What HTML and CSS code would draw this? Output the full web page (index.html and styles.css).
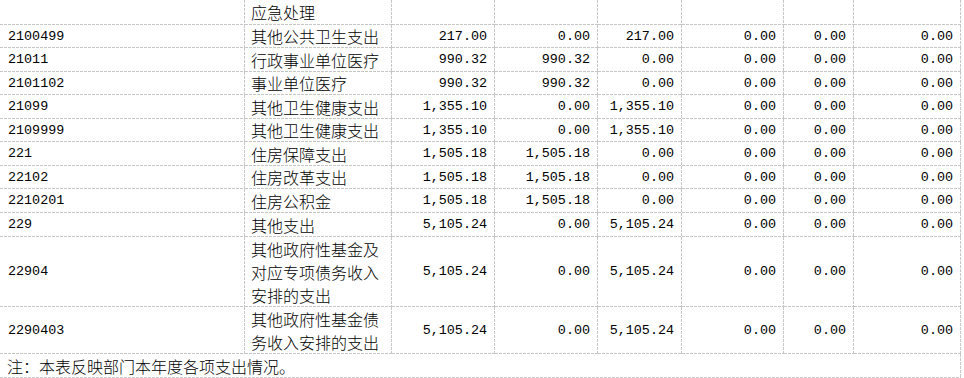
FILE: index.html
```html
<!DOCTYPE html>
<html lang="zh-CN">
<head>
<meta charset="utf-8">
<title>支出表</title>
<link rel="stylesheet" href="styles.css">
</head>
<body>
<table class="sheet">
  <colgroup>
    <col class="w0"><col class="w1"><col class="w2"><col class="w3"><col class="w4"><col class="w5"><col class="w6"><col class="w7">
  </colgroup>
  <tbody>
    <tr class="h25"><td class="c code"></td><td class="c name">应急处理</td><td class="c num"></td><td class="c num"></td><td class="c num"></td><td class="c num"></td><td class="c num"></td><td class="c num"></td></tr>
    <tr class="h23"><td class="c code">2100499</td><td class="c name">其他公共卫生支出</td><td class="c num">217.00</td><td class="c num">0.00</td><td class="c num">217.00</td><td class="c num">0.00</td><td class="c num">0.00</td><td class="c num">0.00</td></tr>
    <tr class="h24"><td class="c code">21011</td><td class="c name">行政事业单位医疗</td><td class="c num">990.32</td><td class="c num">990.32</td><td class="c num">0.00</td><td class="c num">0.00</td><td class="c num">0.00</td><td class="c num">0.00</td></tr>
    <tr class="h23"><td class="c code">2101102</td><td class="c name">事业单位医疗</td><td class="c num">990.32</td><td class="c num">990.32</td><td class="c num">0.00</td><td class="c num">0.00</td><td class="c num">0.00</td><td class="c num">0.00</td></tr>
    <tr class="h24"><td class="c code">21099</td><td class="c name">其他卫生健康支出</td><td class="c num">1,355.10</td><td class="c num">0.00</td><td class="c num">1,355.10</td><td class="c num">0.00</td><td class="c num">0.00</td><td class="c num">0.00</td></tr>
    <tr class="h23"><td class="c code">2109999</td><td class="c name">其他卫生健康支出</td><td class="c num">1,355.10</td><td class="c num">0.00</td><td class="c num">1,355.10</td><td class="c num">0.00</td><td class="c num">0.00</td><td class="c num">0.00</td></tr>
    <tr class="h24"><td class="c code">221</td><td class="c name">住房保障支出</td><td class="c num">1,505.18</td><td class="c num">1,505.18</td><td class="c num">0.00</td><td class="c num">0.00</td><td class="c num">0.00</td><td class="c num">0.00</td></tr>
    <tr class="h23"><td class="c code">22102</td><td class="c name">住房改革支出</td><td class="c num">1,505.18</td><td class="c num">1,505.18</td><td class="c num">0.00</td><td class="c num">0.00</td><td class="c num">0.00</td><td class="c num">0.00</td></tr>
    <tr class="h24"><td class="c code">2210201</td><td class="c name">住房公积金</td><td class="c num">1,505.18</td><td class="c num">1,505.18</td><td class="c num">0.00</td><td class="c num">0.00</td><td class="c num">0.00</td><td class="c num">0.00</td></tr>
    <tr class="h24"><td class="c code">229</td><td class="c name">其他支出</td><td class="c num">5,105.24</td><td class="c num">0.00</td><td class="c num">5,105.24</td><td class="c num">0.00</td><td class="c num">0.00</td><td class="c num">0.00</td></tr>
    <tr class="h69"><td class="c code">22904</td><td class="c name">其他政府性基金及对应专项债务收入安排的支出</td><td class="c num">5,105.24</td><td class="c num">0.00</td><td class="c num">5,105.24</td><td class="c num">0.00</td><td class="c num">0.00</td><td class="c num">0.00</td></tr>
    <tr class="h47"><td class="c code">2290403</td><td class="c name">其他政府性基金债务收入安排的支出</td><td class="c num">5,105.24</td><td class="c num">0.00</td><td class="c num">5,105.24</td><td class="c num">0.00</td><td class="c num">0.00</td><td class="c num">0.00</td></tr>
    <tr class="h24"><td class="c note" colspan="8">注：本表反映部门本年度各项支出情况。</td></tr>
  </tbody>
</table>
</body>
</html>
```

FILE: styles.css
```css
html, body {
  margin: 0;
  padding: 0;
  background: #ffffff;
}

.sheet {
  border-collapse: collapse;
  border-spacing: 0;
  table-layout: fixed;
  width: 961px;
  color: #000000;
}

.w0 { width: 245px; }
.w1 { width: 147px; }
.w2 { width: 103px; }
.w3 { width: 103px; }
.w4 { width: 84px; }
.w5 { width: 102px; }
.w6 { width: 70px; }
.w7 { width: 107px; }

.h23 { height: 23px; }
.h24 { height: 24px; }
.h25 { height: 25px; }
.h47 { height: 47px; }
.h69 { height: 70px; }

.c {
  padding: 0;
  border: 0;
  vertical-align: middle;
  white-space: normal;
  background-image:
    repeating-linear-gradient(90deg, #c6c6c6 0 3px, transparent 3px 4px),
    repeating-linear-gradient(180deg, #c6c6c6 0 3px, transparent 3px 4px);
  background-size: 100% 1px, 1px 100%;
  background-position: left bottom, right top;
  background-repeat: no-repeat;
}

.code {
  font-family: "Liberation Mono", "DejaVu Sans Mono", monospace;
  font-size: 13.4px;
  line-height: 16px;
  padding-left: 8px;
  text-align: left;
}

.name {
  font-family: "Noto Sans CJK SC", "Noto Sans", sans-serif;
  font-size: 16px;
  font-weight: 300;
  line-height: 23px;
  padding-left: 6px;
  padding-right: 6px;
  text-align: left;
}

.num {
  font-family: "Liberation Mono", "DejaVu Sans Mono", monospace;
  font-size: 13.4px;
  line-height: 16px;
  padding-right: 8px;
  text-align: right;
}

.note {
  font-family: "Noto Sans CJK SC", "Noto Sans", sans-serif;
  font-size: 16px;
  font-weight: 300;
  line-height: 23px;
  padding-left: 7px;
  text-align: left;
}
```
